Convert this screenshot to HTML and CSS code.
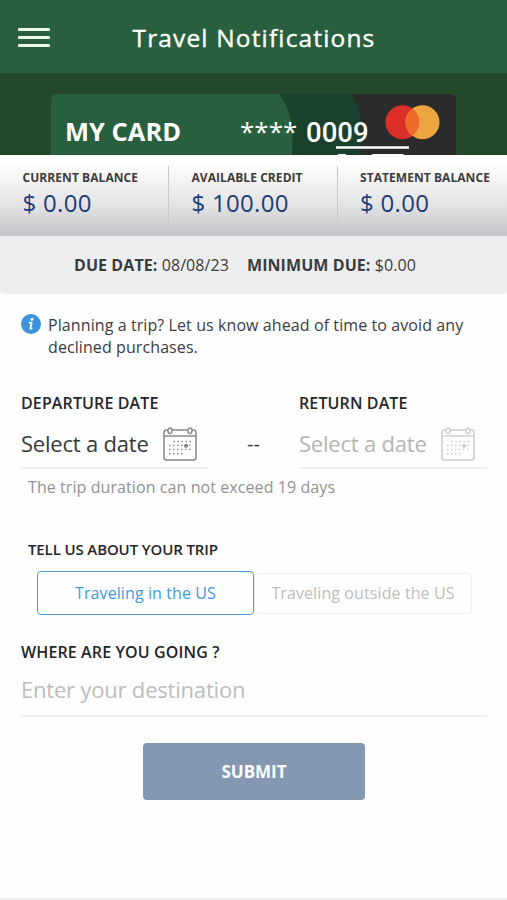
FILE: index.html
```html
<!DOCTYPE html>
<html lang="en">
<head>
<meta charset="utf-8">
<title>Travel Notifications</title>
<link rel="stylesheet" href="styles.css">
</head>
<body>
<svg class="defs" aria-hidden="true">
  <symbol id="calendar" viewBox="0 0 34 34">
    <rect x="1" y="3" width="32" height="30" rx="2.5" fill="none" stroke="currentColor" stroke-width="1.5"/>
    <path d="M1 9H33" stroke="currentColor" stroke-width="1.400"/>
    <ellipse cx="7" cy="3.8" rx="2.1" ry="2.8" fill="#fff" stroke="currentColor" stroke-width="1.400"/>
    <ellipse cx="27" cy="3.8" rx="2.1" ry="2.8" fill="#fff" stroke="currentColor" stroke-width="1.400"/>
    <path d="M10.500 14.500H29M6 18.500H29M6 22.500H29M6 26.700H21" stroke="currentColor" stroke-width="1.400" stroke-dasharray="1.4 2.6"/>
    <circle cx="23" cy="18.8" r="2.100" fill="currentColor"/>
  </symbol>
</svg>
<header class="header">
  <button class="menu" aria-label="Menu"><i></i><i></i><i></i></button>
  <h1 class="title">Travel Notifications</h1>
</header>
<section class="hero">
  <div class="card">
    <svg class="card-art" viewBox="0 0 405 61" aria-hidden="true">
      <rect width="405" height="61" fill="#28603f"/>
      <path d="M228 0H405V61H241C243 35 240 16 228 0Z" fill="#1a412c"/>
      <path d="M301 0H405V61H309C312 35 311 18 301 0Z" fill="#2b2b2b"/>
      <circle cx="351.500" cy="28.300" r="17" fill="#dc2f2a"/>
      <circle cx="371.500" cy="28.300" r="17" fill="#eda53f"/>
      <path d="M361.500 14.600A17 17 0 0 1 361.500 42A17 17 0 0 1 361.500 14.600Z" fill="#ee6a2c"/>
      <path d="M285 53.500H358" stroke="#fff" stroke-width="2.400"/>
      <path d="M286 61L288 60H294L296 61ZM320 61L322 60H351L354 61Z" fill="#fff"/>
    </svg>
    <div class="card-text">
      <span class="card-name">MY CARD</span>
      <span class="card-number"><span class="stars">****</span><span class="digits">0009</span></span>
    </div>
  </div>
</section>
<section class="balances">
  <div class="balance"><span class="balance-label">CURRENT BALANCE</span><span class="amount">$ 0.00</span></div>
  <div class="balance"><span class="balance-label">AVAILABLE CREDIT</span><span class="amount">$ 100.00</span></div>
  <div class="balance"><span class="balance-label">STATEMENT BALANCE</span><span class="amount">$ 0.00</span></div>
</section>
<section class="due">
  <span class="due-date"><b>DUE DATE:</b> 08/08/23</span>
  <span class="due-min"><b>MINIMUM DUE:</b> $0.00</span>
</section>
<main class="form">
  <div class="info">
    <svg class="info-icon" viewBox="0 0 20 20" aria-hidden="true">
      <circle cx="10" cy="10" r="10" fill="#3b93dc"/>
      <circle cx="11" cy="5.300" r="1.500" fill="#fff"/>
      <path d="M7.700 8.600H10.700L9.300 14.500H11.400" fill="none" stroke="#fff" stroke-width="1.900" stroke-linejoin="round"/>
    </svg>
    <p class="info-text">Planning a trip? Let us know ahead of time to avoid any<br>declined purchases.</p>
  </div>
  <div class="dates">
    <div class="date">
      <span class="label departure">DEPARTURE DATE</span>
      <div class="picker"><span>Select a date</span><svg class="calendar"><use href="#calendar"/></svg></div>
    </div>
    <span class="dash">--</span>
    <div class="date return">
      <span class="label">RETURN DATE</span>
      <div class="picker disabled"><span>Select a date</span><svg class="calendar"><use href="#calendar"/></svg></div>
    </div>
  </div>
  <p class="note">The trip duration can not exceed 19 days</p>
  <span class="label trip">TELL US ABOUT YOUR TRIP</span>
  <div class="segments">
    <button class="segment active">Traveling in the US</button>
    <button class="segment">Traveling outside the US</button>
  </div>
  <label class="label where" for="destination">WHERE ARE YOU GOING ?</label>
  <input class="destination" id="destination" placeholder="Enter your destination">
  <button class="submit">SUBMIT</button>
</main>
</body>
</html>
```
FILE: styles.css
```css
* { box-sizing: border-box; }
body {
  margin: 0;
  height: 900px;
  display: flex;
  flex-direction: column;
  background: #fefefe;
  color: #3b3c3e;
  font-family: "Open Sans", sans-serif;
  overflow: hidden;
}
button, input { font: inherit; margin: 0; padding: 0; border: 0; background: none; }
h1, p { margin: 0; }
.defs { position: absolute; width: 0; height: 0; }

.header {
  height: 73px;
  flex: none;
  display: flex;
  align-items: center;
  padding: 2px 0 0 18px;
  background: #28603f;
  color: #fbfff9;
}
.menu { width: 32px; display: grid; gap: 5.200px; }
.menu i { height: 2.600px; border-radius: 1px; background: #eef8e9; }
.title {
  margin-left: 82.500px;
  font-size: 24.500px;
  line-height: 33px;
  font-weight: 500;
  letter-spacing: 1.150px;
  white-space: nowrap;
  -webkit-text-stroke: 0.400px currentColor;
}

.hero { height: 82px; flex: none; padding: 21px 51px 0; background: #24492a; }
.card { display: grid; width: 405px; height: 61px; border-radius: 6px 6px 0 0; overflow: hidden; color: #fff; }
.card-art, .card-text { grid-area: 1 / 1; }
.card-art { width: 405px; height: 61px; }
.card-text { display: flex; height: 61px; line-height: 35px; padding: 20px 0 0 14px; }
.card-name { width: 175px; font-size: 25.500px; font-weight: 700; }
.card-number { display: flex; gap: 8px; }
.stars { font-size: 26px; width: 58px; }
.digits { font: 500 27.500px/37px Roboto, sans-serif; }

.balances {
  height: 81px;
  flex: none;
  display: grid;
  grid-template-columns: 169px 169px 1fr;
  padding-top: 11px;
  background: linear-gradient(#fff 10%, #e5e5e7 60%, #c3c4c7);
}
.balance { height: 57px; padding: 4px 0 0 22.500px; border-right: 1px solid #c8c9cc; white-space: nowrap; }
.balance:last-child { border: 0; padding-left: 22px; }
.balance-label { display: block; font-size: 12px; line-height: 16px; font-weight: 700; letter-spacing: 0.060px; }
.amount { display: block; font-size: 24px; line-height: 33px; letter-spacing: 0.300px; color: #203c78; }

.due {
  height: 58px;
  flex: none;
  display: flex;
  padding-left: 74px;
  gap: 18px;
  line-height: 58px;
  font-size: 16px;
  letter-spacing: 0.080px;
  white-space: nowrap;
  background: #edeef0;
  border-radius: 0 0 4px 4px;
}

.form { flex: 1; display: flex; flex-direction: column; padding: 20px 20px 0 21px; border-bottom: 2px solid #efefef; }
.info { display: flex; gap: 7px; }
.info-icon { width: 20px; height: 20px; }
.info-text { font-size: 16px; line-height: 22px; letter-spacing: 0.090px; white-space: nowrap; }
.label { font-size: 16px; line-height: 22px; font-weight: 600; letter-spacing: 0.120px; color: #242528; white-space: nowrap; }
.dates { display: flex; margin-top: 34px; }
.date { width: 187px; }
.return { width: 188px; }
.picker {
  display: flex;
  align-items: center;
  justify-content: space-between;
  height: 55px;
  padding: 5px 11px 0 0;
  border-bottom: 2px solid #efefef;
  font-size: 22px;
  letter-spacing: -0.200px;
  color: #37383a;
  white-space: nowrap;
}
.return .picker { padding-right: 12px; }
.date .label { display: block; }
.calendar { width: 34px; height: 34px; margin-top: 1px; color: #85868a; }
.disabled { color: #b4b4b4; }
.disabled .calendar { color: #cbcbcb; }
.dash { width: 91px; text-align: center; font-size: 20px; line-height: 104px; height: 77px; }
.note { margin: 7px 0 0 7px; font-size: 16px; line-height: 22px; letter-spacing: 0.080px; color: #929292; white-space: nowrap; }
.trip { margin: 40px 0 0 7px; font-size: 15px; letter-spacing: -0.120px; }
.segments { display: flex; align-items: center; margin: 11px 0 0 16px; }
.segment { width: 218px; height: 41px; border: 1px solid #f0f0f0; border-radius: 4px; font-size: 16px; letter-spacing: 0.100px; color: #bdbdbd; white-space: nowrap; }
.active { width: 217px; height: 44px; border: 1.500px solid #4e9bdc; color: #429adf; }
.where { margin-top: 26px; }
.destination { height: 54px; border-bottom: 2px solid #efefef; font-size: 22px; letter-spacing: -0.200px; }
.destination::placeholder { color: #bdbdbd; opacity: 1; }
.submit { width: 222px; height: 57px; margin: 26px 0 0 122px; border-radius: 4px; background: #8598b1; color: #fbfdff; font-size: 17px; font-weight: 700; }
```
